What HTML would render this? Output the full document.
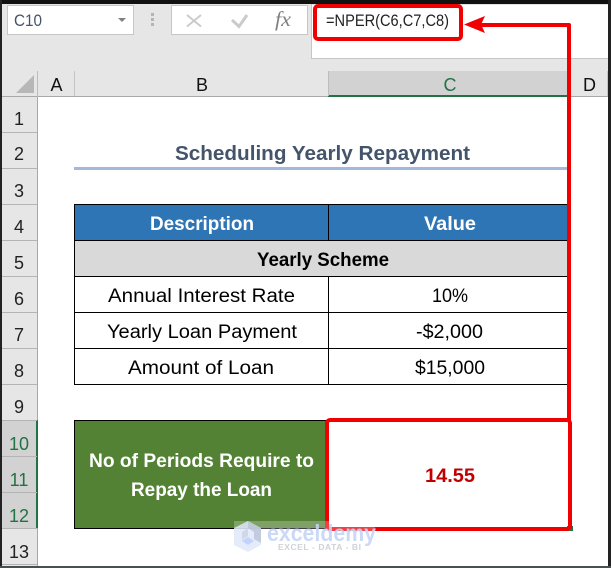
<!DOCTYPE html>
<html><head><meta charset="utf-8"><style>
html,body{margin:0;padding:0;background:#fff;width:611px;height:568px;overflow:hidden}
svg{display:block}
text{font-family:"Liberation Sans",sans-serif}
</style></head><body>
<svg width="611" height="568" viewBox="0 0 611 568" xmlns="http://www.w3.org/2000/svg" shape-rendering="crispEdges">
<rect width="611" height="568" fill="#fff"/>
<!-- toolbar -->
<rect x="0" y="0" width="611" height="97" fill="#e6e6e6"/>
<rect x="7.5" y="5.5" width="126" height="29" fill="#fff" stroke="#c6c6c6"/>
<rect x="171.5" y="5.5" width="136" height="29" fill="#fff" stroke="#c6c6c6"/>
<rect x="311.5" y="4" width="300" height="54.5" fill="#fff" stroke="#c6c6c6"/>
<path d="M118 18h8l-4 4z" fill="#808080" shape-rendering="auto"/>
<g fill="#b4b4b4"><rect x="151" y="13" width="3" height="3"/><rect x="151" y="18" width="3" height="3"/><rect x="151" y="23" width="3" height="3"/></g>
<g shape-rendering="auto" fill="none" stroke="#cbcbcb" stroke-width="2">
<path d="M187 15l14 11.500M201 15l-14 11.500"/>
<path d="M232 20l7 6.500 8-11.500" stroke-width="3"/>
</g>
<text x="275" y="26" style="font-family:'Liberation Serif',serif;font-style:italic" font-size="21" fill="#808080" textLength="16" lengthAdjust="spacingAndGlyphs">fx</text>
<text x="14" y="26" font-size="17" fill="#44546a" textLength="28" lengthAdjust="spacingAndGlyphs">C10</text>
<text x="326" y="26" font-size="17" fill="#222" textLength="123" lengthAdjust="spacingAndGlyphs">=NPER(C6,C7,C8)</text>
<!-- column headers -->
<rect x="328" y="71" width="240" height="25" fill="#d2d2d2"/>
<rect x="0" y="96" width="611" height="1" fill="#a8a8a8"/>
<rect x="328" y="95" width="240" height="2" fill="#217346"/>
<path d="M16 93L34 93L34 75z" fill="#b7b7b7" shape-rendering="auto"/>
<rect x="37" y="71" width="1" height="26" fill="#bdbdbd"/>
<rect x="74" y="71" width="1" height="25" fill="#c4c4c4"/>
<rect x="328" y="71" width="1" height="25" fill="#bdbdbd"/>
<rect x="607" y="71" width="1" height="25" fill="#c4c4c4"/>
<g font-size="18" fill="#111" text-anchor="middle">
<text x="56.500" y="91">A</text><text x="202" y="91">B</text>
<text x="450" y="91" fill="#217346">C</text><text x="589.500" y="91">D</text>
</g>
<!-- row headers -->
<rect x="0" y="97" width="37" height="471" fill="#e6e6e6"/>
<rect x="0" y="420" width="37" height="108" fill="#d2d2d2"/>
<rect x="37" y="97" width="1" height="471" fill="#a8a8a8"/>
<rect x="36" y="420" width="2" height="108" fill="#217346"/>
<g fill="#b4b4b4">
<rect x="2" y="132" width="35" height="1"/><rect x="2" y="168" width="35" height="1"/><rect x="2" y="204" width="35" height="1"/><rect x="2" y="240" width="35" height="1"/><rect x="2" y="276" width="35" height="1"/><rect x="2" y="312" width="35" height="1"/><rect x="2" y="348" width="35" height="1"/><rect x="2" y="384" width="35" height="1"/><rect x="2" y="420" width="35" height="1"/><rect x="2" y="456" width="35" height="1"/><rect x="2" y="492" width="35" height="1"/><rect x="2" y="528" width="35" height="1"/><rect x="2" y="564" width="35" height="1"/>
</g>
<g font-size="18" fill="#222" text-anchor="middle">
<text x="19" y="125">1</text><text x="19" y="160">2</text><text x="19" y="197">3</text><text x="19" y="233">4</text><text x="19" y="269">5</text><text x="19" y="305">6</text><text x="19" y="341">7</text><text x="19" y="377">8</text><text x="19" y="413">9</text>
<g fill="#217346"><text x="19" y="450">10</text><text x="19" y="486">11</text><text x="19" y="522">12</text></g>
<text x="19" y="558">13</text>
</g>
<!-- title -->
<text x="175" y="160" font-size="20" font-weight="bold" fill="#44546a" textLength="295" lengthAdjust="spacingAndGlyphs">Scheduling Yearly Repayment</text>
<rect x="74" y="167" width="494" height="3" fill="#a4b7dd"/>
<!-- table -->
<rect x="74" y="204" width="494" height="36" fill="#2e75b6"/>
<rect x="74" y="240" width="494" height="36" fill="#d9d9d9"/>
<g fill="#000">
<rect x="74" y="204" width="494" height="1"/><rect x="74" y="240" width="494" height="1"/><rect x="74" y="276" width="494" height="1"/><rect x="74" y="312" width="494" height="1"/><rect x="74" y="348" width="494" height="1"/><rect x="74" y="384" width="494" height="1"/>
<rect x="74" y="204" width="1" height="181"/><rect x="328" y="204" width="1" height="37"/><rect x="328" y="276" width="1" height="109"/>
</g>
<text x="150" y="230" font-size="19" font-weight="bold" fill="#fff" textLength="104" lengthAdjust="spacingAndGlyphs">Description</text>
<text x="424" y="230" font-size="19" font-weight="bold" fill="#fff" textLength="52" lengthAdjust="spacingAndGlyphs">Value</text>
<text x="257" y="266" font-size="19" font-weight="bold" fill="#000" textLength="132" lengthAdjust="spacingAndGlyphs">Yearly Scheme</text>
<g font-size="19" fill="#000">
<text x="108" y="302" textLength="187" lengthAdjust="spacingAndGlyphs">Annual Interest Rate</text>
<text x="107" y="338" textLength="190" lengthAdjust="spacingAndGlyphs">Yearly Loan Payment</text>
<text x="128" y="374" textLength="146" lengthAdjust="spacingAndGlyphs">Amount of Loan</text>
<text x="432" y="302" textLength="36" lengthAdjust="spacingAndGlyphs">10%</text>
<text x="416" y="338" textLength="67" lengthAdjust="spacingAndGlyphs">-$2,000</text>
<text x="415" y="374" textLength="70" lengthAdjust="spacingAndGlyphs">$15,000</text>
</g>
<!-- result -->
<rect x="74.500" y="420.500" width="252" height="108" fill="#548235" stroke="#000"/>
<text x="89" y="467" font-size="19" font-weight="bold" fill="#fff" textLength="225" lengthAdjust="spacingAndGlyphs">No of Periods Require to</text>
<text x="131" y="496" font-size="19" font-weight="bold" fill="#fff" textLength="141" lengthAdjust="spacingAndGlyphs">Repay the Loan</text>
<text x="425" y="482" font-size="19" font-weight="bold" fill="#c00000" textLength="50" lengthAdjust="spacingAndGlyphs">14.55</text>
<rect x="567" y="526" width="6" height="5" fill="#217346"/>
<!-- red annotations -->
<g shape-rendering="auto" fill="none" stroke="#f00000" stroke-width="4">
<rect x="315" y="6" width="146" height="33" rx="3"/>
<rect x="327" y="420" width="243" height="109" rx="3"/>
<path d="M569 420V25H480" stroke-linejoin="round"/>
</g>
<path d="M464 24.500L485 16L481 24.500L485 33z" fill="#f00000" shape-rendering="auto"/>
<!-- watermark -->
<rect x="234" y="521" width="141" height="10" fill="#fff" opacity=".25"/>
<g shape-rendering="auto">
<path d="M248 521L261 528V545L248 552L234 545V528z" fill="#dfe7fa" opacity=".85"/>
<path d="M248 521L261 528V543L254 539V532L248 528z" fill="#b8c2d2" opacity=".75"/>
<path d="M242 532L248 528V536L242 540z" fill="#c9d2e2" opacity=".75"/>
<path d="M242 541L248 537L254 541L248 545z" fill="#c3d3fb"/>
<text x="267" y="541" font-size="23" font-weight="bold" fill="#c6d4f6" opacity=".9" textLength="109" lengthAdjust="spacingAndGlyphs">exceldemy</text>
<text x="278" y="550" font-size="8.500" font-weight="bold" fill="#cfd2d6" textLength="83" lengthAdjust="spacing">EXCEL - DATA - BI</text>
</g>
<!-- window edges -->
<rect x="0" y="0" width="611" height="4" fill="#111"/>
<rect x="0" y="0" width="2" height="568" fill="#222"/>
<rect x="608" y="0" width="3" height="568" fill="#222"/>
<rect x="0" y="566" width="611" height="2" fill="#4a4f52"/>
</svg>
</body></html>
